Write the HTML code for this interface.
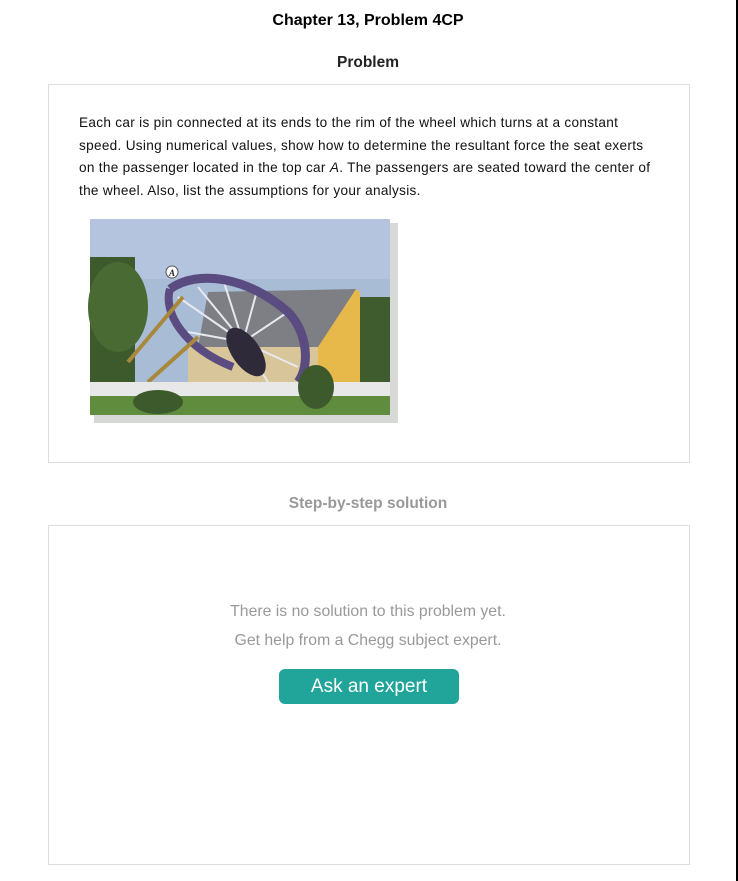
<!DOCTYPE html>
<html><head><meta charset="utf-8"><style>
html,body{margin:0;padding:0;background:#fff;}
body{width:738px;height:881px;position:relative;overflow:hidden;font-family:"Liberation Sans",Arial,sans-serif;}
.edge{position:absolute;left:736px;top:0;width:2px;height:881px;background:#000;}
h1{position:absolute;top:12px;left:0;width:736px;text-align:center;font-size:16px;font-weight:bold;margin:0;color:#000;}
.h2{position:absolute;left:0;width:736px;text-align:center;font-size:15.5px;font-weight:bold;margin:0;}
.box{position:absolute;left:48px;width:640px;border:1px solid #ddd;}
.txt{position:absolute;left:79px;top:112px;width:578px;font-size:13.6px;letter-spacing:0.3px;line-height:22.5px;color:#111;}
.msg{position:absolute;left:0;width:736px;text-align:center;font-size:15.8px;color:#999;}
.btn{position:absolute;left:279px;top:669px;width:180px;height:35px;background:#21a499;border-radius:6px;color:#fff;font-size:19px;text-align:center;line-height:35px;}
</style></head><body>
<div class="edge"></div>
<h1>Chapter 13, Problem 4CP</h1>
<div class="h2" style="top:54px;color:#222;">Problem</div>
<div class="box" style="top:84px;height:377px;"></div>
<div class="txt">Each car is pin connected at its ends to the rim of the wheel which turns at a constant speed. Using numerical values, show how to determine the resultant force the seat exerts on the passenger located in the top car <i>A</i>. The passengers are seated toward the center of the wheel. Also, list the assumptions for your analysis.</div>
<svg style="position:absolute;left:88px;top:217px" width="312" height="208" viewBox="0 0 312 208">
<rect x="6" y="6" width="304" height="200" fill="#d6d9d6"/>
<rect x="2" y="2" width="300" height="196" fill="#a9bcd6"/>
<rect x="2" y="2" width="300" height="60" fill="#b4c4de"/>
<rect x="2" y="40" width="45" height="140" fill="#3d5a2c"/>
<ellipse cx="30" cy="90" rx="30" ry="45" fill="#4a6a33"/>
<rect x="272" y="80" width="30" height="100" fill="#3f5c2e"/>
<polygon points="120,75 268,72 240,130 110,130" fill="#7e7f84"/>
<polygon points="268,72 272,75 272,170 230,170 230,130" fill="#e7b84a"/>
<rect x="100" y="130" width="130" height="40" fill="#d8c59a"/>
<g stroke="#e8e8ef" stroke-width="2">
<line x1="155" y1="125" x2="90" y2="80"/><line x1="155" y1="125" x2="110" y2="70"/><line x1="155" y1="125" x2="135" y2="62"/><line x1="155" y1="125" x2="170" y2="70"/><line x1="155" y1="125" x2="200" y2="95"/><line x1="155" y1="125" x2="210" y2="150"/><line x1="155" y1="125" x2="180" y2="165"/><line x1="155" y1="125" x2="100" y2="115"/>
</g>
<path d="M82,72 C110,52 160,60 200,95 C220,115 222,150 210,165" fill="none" stroke="#5a4c80" stroke-width="9"/>
<path d="M82,72 C75,95 95,130 145,150" fill="none" stroke="#5a4c80" stroke-width="8"/>
<ellipse cx="158" cy="135" rx="14" ry="28" fill="#2e2a3a" transform="rotate(-35 158 135)"/>
<g stroke="#a8893c" stroke-width="4"><line x1="40" y1="145" x2="95" y2="80"/><line x1="60" y1="165" x2="110" y2="120"/></g>
<rect x="2" y="165" width="300" height="14" fill="#e8e8e8"/>
<rect x="2" y="179" width="300" height="19" fill="#5f8d3d"/>
<ellipse cx="228" cy="170" rx="18" ry="22" fill="#3d5a2c"/>
<ellipse cx="70" cy="185" rx="25" ry="12" fill="#3d5a2c"/>
<circle cx="84" cy="55" r="6" fill="#fff" stroke="#555" stroke-width="1"/>
<text x="81" y="59" font-size="9" font-style="italic" font-weight="bold" font-family="Liberation Serif" fill="#222">A</text>
</svg>
<div class="h2" style="top:495px;color:#999;">Step-by-step solution</div>
<div class="box" style="top:525px;height:338px;"></div>
<div class="msg" style="top:603px;">There is no solution to this problem yet.</div>
<div class="msg" style="top:632px;">Get help from a Chegg subject expert.</div>
<div class="btn">Ask an expert</div>
</body></html>
